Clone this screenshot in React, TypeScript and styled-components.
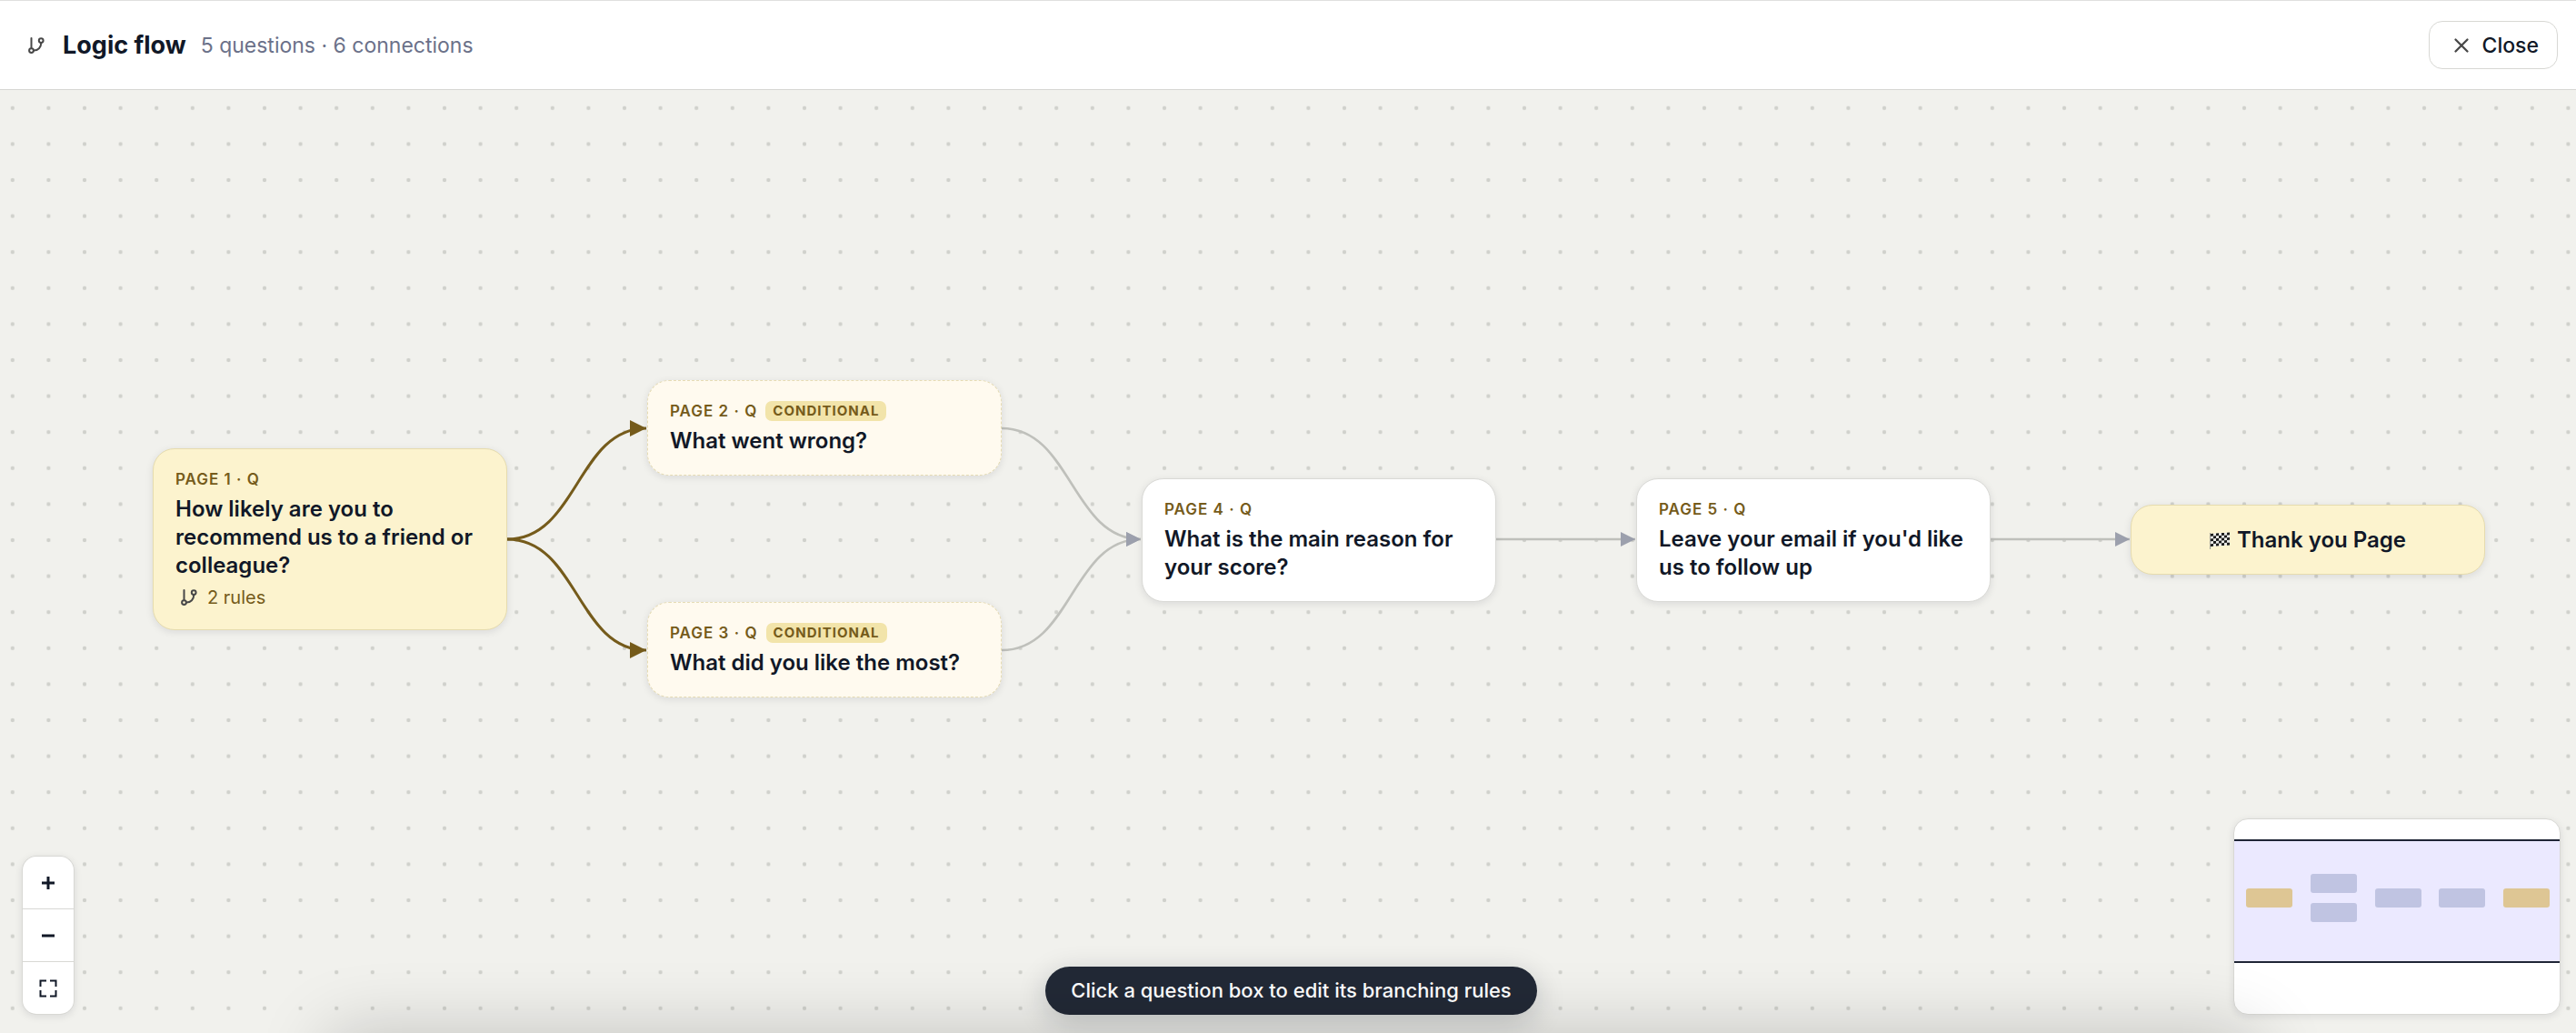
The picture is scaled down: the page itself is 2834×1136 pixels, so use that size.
import React from "react";
import styled, { createGlobalStyle, css } from "styled-components";

const GlobalStyle = createGlobalStyle`
  *, *::before, *::after { box-sizing: border-box; }
  body {
    margin: 0;
    font-family: Inter, "Liberation Sans", sans-serif;
    color: #111827;
    background: #f1f1ed;
  }
  button { font: inherit; color: inherit; cursor: pointer; }
`;

const Page = styled.div`
  display: flex;
  flex-direction: column;
  min-height: 100vh;
`;

const Header = styled.header`
  display: flex;
  align-items: center;
  justify-content: space-between;
  padding: 22px 20px 22px 28px;
  background: #ffffff;
  border-top: 1px solid #e0e0df;
  border-bottom: 1px solid #d6d6d3;
`;

const Heading = styled.div`
  display: flex;
  align-items: center;
`;

const Title = styled.h1`
  margin: 0 16px 0 17px;
  font-size: 27px;
  line-height: 34px;
  font-weight: 700;
`;

const Summary = styled.p`
  margin: 0;
  font-size: 23px;
  line-height: 34px;
  color: #6b7189;
`;

const CloseButton = styled.button`
  display: flex;
  align-items: center;
  gap: 12px;
  padding: 0 20px 0 24px;
  height: 53px;
  border: 1px solid #d8d8d4;
  border-radius: 15px;
  background: #ffffff;
  font-size: 23px;
  font-weight: 500;
`;

const Canvas = styled.main`
  position: relative;
  flex: 1;
  overflow: hidden;
  background: #f1f1ed;
`;

const Layer = styled.svg`
  position: absolute;
  inset: 0;
  width: 100%;
  height: 100%;
`;

type Tone = "highlight" | "conditional" | "plain";

const tones = {
  highlight: css`
    background: #fcf3ce;
    border: 1px solid #e6dcae;
  `,
  conditional: css`
    background: #fffaef;
    border: 1px dashed #e6dcb4;
  `,
  plain: css`
    background: #ffffff;
    border: 1px solid #dadad6;
  `,
};

const Node = styled.button<{ $x: number; $y: number; $tone: Tone; $center?: boolean }>`
  position: absolute;
  left: ${(p) => p.$x}px;
  top: ${(p) => p.$y}px;
  width: 390px;
  display: flex;
  flex-direction: column;
  align-items: ${(p) => (p.$center ? "center" : "flex-start")};
  padding: 22px 24px;
  border-radius: 24px;
  box-shadow: 0 2px 8px rgba(17, 24, 39, 0.1);
  text-align: left;
  ${(p) => tones[p.$tone]}
`;

const NodeMeta = styled.span`
  display: flex;
  align-items: center;
  gap: 9px;
  min-height: 22px;
  margin-bottom: 6px;
  font-size: 17px;
  line-height: 22px;
  font-weight: 600;
  letter-spacing: 1px;
  color: #755b1b;
`;

const Badge = styled.span`
  padding: 0 8px;
  border-radius: 7px;
  background: #f2e4aa;
  font-size: 15px;
  line-height: 22px;
  font-weight: 700;
`;

const NodeTitle = styled.span`
  display: flex;
  align-items: center;
  gap: 8px;
  font-size: 24px;
  line-height: 31px;
  font-weight: 600;
`;

const NodeRules = styled.span`
  display: flex;
  align-items: center;
  gap: 8px;
  margin-top: 7px;
  padding-left: 3px;
  font-size: 20px;
  line-height: 26px;
  color: #755b1b;
`;

const Overlay = styled.div`
  position: absolute;
  inset: auto 17px 20px 24px;
  display: grid;
  grid-template-columns: 1fr auto 1fr;
  align-items: end;
`;

const ZoomControls = styled.div`
  justify-self: start;
  display: flex;
  flex-direction: column;
  width: 58px;
  overflow: hidden;
  border: 1px solid #d8d8d4;
  border-radius: 16px;
  background: #d8d8d4;
  gap: 1px;
  box-shadow: 0 2px 8px rgba(17, 24, 39, 0.1);
`;

const ZoomButton = styled.button`
  display: grid;
  place-items: center;
  height: 57px;
  padding: 0;
  border: 0;
  background: #ffffff;
`;

const Hint = styled.p`
  margin: 0;
  padding: 0 28px;
  border-radius: 27px;
  background: #222936;
  color: #ffffff;
  font-size: 22px;
  line-height: 53px;
  font-weight: 500;
  white-space: nowrap;
  box-shadow: 0 8px 32px rgba(17, 24, 39, 0.2);
`;

const MiniMap = styled.div`
  justify-self: end;
  width: 360px;
  overflow: hidden;
  border: 1px solid #d8d8d4;
  border-radius: 16px;
  background: #ffffff;
  box-shadow: 0 2px 8px rgba(17, 24, 39, 0.1);
  svg { display: block; }
`;

const BottomShade = styled.div`
  position: absolute;
  top: 100%;
  left: 362px;
  right: 352px;
  height: 200px;
  box-shadow: 0 0 80px rgba(0, 0, 0, 0.2);
  pointer-events: none;
`;

function BranchIcon() {
  return (
    <svg width="24" height="24" viewBox="0 0 24 24" fill="none" stroke="#484848" strokeWidth="2" strokeLinecap="round" aria-hidden="true">
      <path d="M6.500 4v11" />
      <circle cx="6.5" cy="17.6" r="2.4" />
      <circle cx="17.2" cy="6.6" r="2.4" />
      <path d="M17.200 9.500c0 4.700-3.300 8.100-8 8.100" />
    </svg>
  );
}

function CloseIcon() {
  return (
    <svg width="22" height="22" viewBox="0 0 22 22" fill="none" stroke="#484848" strokeWidth="2.300" strokeLinecap="round" aria-hidden="true">
      <path d="M4.500 4.500l13 13M17.500 4.500l-13 13" />
    </svg>
  );
}

function GlyphIcon({ d, width }: { d: string; width: number }) {
  return (
    <svg width="24" height="24" viewBox="0 0 24 24" fill="none" stroke="#111827" strokeWidth={width} aria-hidden="true">
      <path d={d} />
    </svg>
  );
}

function FlagIcon() {
  const cells = [];
  for (let row = 0; row < 5; row++) {
    for (let col = 0; col < 7; col++) {
      if ((row + col) % 2 === 0) {
        cells.push(<rect key={`${row}-${col}`} x={1 + col * 3} y={3 + row * 2.8} width="3" height="2.8" fill="#1b1b1b" />);
      }
    }
  }
  return (
    <svg width="22" height="20" viewBox="0 0 22 20" aria-hidden="true">
      <path d="M0.500 2v18" stroke="#9a9a94" />
      <g transform="skewY(-4)">
        <rect x="1" y="3" width="21" height="14" fill="#e9e9e6" />
        {cells}
      </g>
    </svg>
  );
}

const NODE_WIDTH = 390;

interface Step {
  id: string;
  x: number;
  y: number;
  tone: Tone;
  page: number;
  title: string;
  rules?: number;
}

const steps: Step[] = [
  { id: "q1", x: 168, y: 394, tone: "highlight", page: 1, title: "How likely are you to recommend us to a friend or colleague?", rules: 2 },
  { id: "q2", x: 712, y: 319, tone: "conditional", page: 2, title: "What went wrong?" },
  { id: "q3", x: 712, y: 563, tone: "conditional", page: 3, title: "What did you like the most?" },
  { id: "q4", x: 1256, y: 427, tone: "plain", page: 4, title: "What is the main reason for your score?" },
  { id: "q5", x: 1800, y: 427, tone: "plain", page: 5, title: "Leave your email if you'd like us to follow up" },
];

const END = { x: 2344, y: 456 };

const edges = [
  { from: [168, 494], to: [712, 372], rule: true },
  { from: [168, 494], to: [712, 616], rule: true },
  { from: [712, 372], to: [1256, 494], rule: false },
  { from: [712, 616], to: [1256, 494], rule: false },
  { from: [1256, 494], to: [1800, 494], rule: false },
  { from: [1800, 494], to: [2344, 494], rule: false },
];

function Edge({ from, to, rule }: { from: number[]; to: number[]; rule: boolean }) {
  const x1 = from[0] + NODE_WIDTH;
  const [x2, y2] = to;
  const mid = (x1 + x2) / 2;
  const length = rule ? 18 : 16;
  const half = length / 2;
  return (
    <g>
      <path
        d={`M${x1} ${from[1]}C${mid} ${from[1]} ${mid} ${y2} ${x2 - 1} ${y2}`}
        fill="none"
        stroke={rule ? "#755b1b" : "#bfc0bb"}
        strokeWidth={rule ? 3 : 2.6}
      />
      <path
        d={`M${x2 - length - 1} ${y2 - half}L${x2 - 1} ${y2}L${x2 - length - 1} ${y2 + half}Z`}
        fill={rule ? "#755b1b" : "#9ca0ad"}
      />
    </g>
  );
}

const miniNodes = [
  { x: 13, y: 76, end: true },
  { x: 84, y: 60, end: false },
  { x: 84, y: 92, end: false },
  { x: 155, y: 76, end: false },
  { x: 225, y: 76, end: false },
  { x: 296, y: 76, end: true },
];

export default function App() {
  return (
    <Page>
      <GlobalStyle />
      <Header>
        <Heading>
          <BranchIcon />
          <Title>Logic flow</Title>
          <Summary>5 questions · 6 connections</Summary>
        </Heading>
        <CloseButton type="button">
          <CloseIcon />
          Close
        </CloseButton>
      </Header>
      <Canvas>
        <Layer aria-hidden="true">
          <defs>
            <pattern id="dots" width="22" height="22" patternUnits="userSpaceOnUse" patternTransform="translate(-6 0) scale(1.8)">
              <circle cx="11" cy="11" r="1.2" fill="#d0d1cc" />
            </pattern>
          </defs>
          <rect width="100%" height="100%" fill="url(#dots)" />
          {edges.map((edge, i) => (
            <Edge key={i} {...edge} />
          ))}
        </Layer>
        {steps.map((step) => (
          <Node key={step.id} type="button" $x={step.x} $y={step.y} $tone={step.tone}>
            <NodeMeta>
              PAGE {step.page} · Q
              {step.tone === "conditional" && <Badge>CONDITIONAL</Badge>}
            </NodeMeta>
            <NodeTitle>{step.title}</NodeTitle>
            {step.rules && (
              <NodeRules>
                <BranchIcon />
                {step.rules} rules
              </NodeRules>
            )}
          </Node>
        ))}
        <Node type="button" $x={END.x} $y={END.y} $tone="highlight" $center>
          <NodeTitle>
            <FlagIcon />
            Thank you Page
          </NodeTitle>
        </Node>
        <Overlay>
          <ZoomControls>
            <ZoomButton type="button" aria-label="Zoom in">
              <GlyphIcon d="M5 12h14M12 5v14" width={3} />
            </ZoomButton>
            <ZoomButton type="button" aria-label="Zoom out">
              <GlyphIcon d="M5 12h14" width={3} />
            </ZoomButton>
            <ZoomButton type="button" aria-label="Fit to screen">
              <GlyphIcon d="M10 3.500H3.500V10M14 3.500h6.500V10M20.500 14v6.500H14M10 20.500H3.500V14" width={2} />
            </ZoomButton>
          </ZoomControls>
          <Hint>Click a question box to edit its branching rules</Hint>
          <MiniMap>
            <svg width="358" height="214" role="img" aria-label="Flow overview">
              <rect x="-4" y="23" width="366" height="134" fill="#ebe9ff" stroke="#1f2536" strokeWidth="2" />
              {miniNodes.map((n, i) => (
                <rect key={i} x={n.x} y={n.y} width="51" height="21" rx="3" fill={n.end ? "#dec694" : "#c0c4e2"} />
              ))}
            </svg>
          </MiniMap>
        </Overlay>
        <BottomShade />
      </Canvas>
    </Page>
  );
}
